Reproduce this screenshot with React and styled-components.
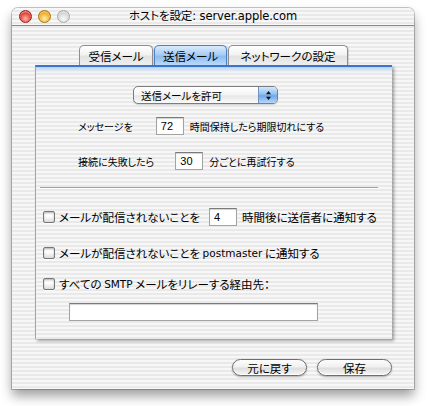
import React from 'react';
import styled, { createGlobalStyle } from 'styled-components';

const Global = createGlobalStyle`
  html, body { margin: 0; padding: 0; background: #ffffff; }
  body { font-family: "Noto Sans CJK JP", sans-serif; color: #000; font-feature-settings: "palt" 1; }
  * { box-sizing: border-box; }
`;

const stripes = 'repeating-linear-gradient(to bottom, #f7f7f7 0px, #f7f7f7 2px, #e9e9e9 2px, #e9e9e9 4px)';
const latin = '"DejaVu Sans", "Noto Sans CJK JP", sans-serif';

const Page = styled.div`
  width: 427px;
  height: 406px;
  padding: 8px 0 0 12px;
  background: #fff;
`;

const Window = styled.div`
  width: 402px;
  height: 381px;
  display: flex;
  flex-direction: column;
  background: ${stripes};
  border-radius: 6px 6px 0 0;
  box-shadow: 0 0 0 1px rgba(0, 0, 0, 0.22), 0 7px 12px rgba(0, 0, 0, 0.38);
  overflow: hidden;
`;

const TitleBar = styled.div`
  height: 18px;
  flex: none;
  display: grid;
  grid-template-columns: 1fr auto 1fr;
  align-items: center;
  padding: 0 7px;
  border-bottom: 1px solid #8a8a8a;
`;

const Lights = styled.div`
  display: flex;
  gap: 6px;
  align-items: center;
`;

const lightColors = {
  red: ['#ffb3a8', '#e0382c', '#9c1d16'],
  yellow: ['#fff0b0', '#f0a81a', '#a8700e'],
  gray: ['#fafafa', '#d2d2d2', '#a9a9a9'],
};

const Light = styled.span`
  width: 13px;
  height: 13px;
  border-radius: 50%;
  background: radial-gradient(circle at 50% 70%, ${p => lightColors[p.$c][0]} 0%, ${p => lightColors[p.$c][1]} 65%, ${p => lightColors[p.$c][2]} 100%);
  border: 1px solid ${p => lightColors[p.$c][2]};
  box-shadow: inset 0 1px 1px rgba(255, 255, 255, 0.6);
`;

const Title = styled.div`
  font-family: ${latin};
  font-size: 11.5px;
  letter-spacing: -0.1px;
  white-space: nowrap;
  line-height: 1;
`;

const Body = styled.div`
  flex: 1;
  display: flex;
  flex-direction: column;
  padding: 19px 22px 0 23px;
`;

const TabBar = styled.div`
  display: flex;
  justify-content: center;
  gap: 1px;
  height: 20px;
  position: relative;
  z-index: 1;
`;

const Tab = styled.div`
  width: ${p => p.$w}px;
  height: 20px;
  display: flex;
  align-items: center;
  justify-content: center;
  font-size: 11.5px;
  border: 1px solid ${p => (p.$active ? '#4d7fc4' : '#8e8e8e')};
  border-bottom: none;
  border-radius: 5px 5px 0 0;
  background: ${p =>
    p.$active
      ? 'linear-gradient(to bottom, #d9ebfd 0%, #a9cdf5 45%, #8dbcf0 55%, #b9daf9 100%)'
      : 'linear-gradient(to bottom, #ffffff 0%, #f2f2f2 45%, #e3e3e3 55%, #eeeeee 100%)'};
  box-shadow: 1px 0 1px rgba(0, 0, 0, 0.15);
`;

const Panel = styled.div`
  height: 274px;
  display: flex;
  flex-direction: column;
  border-top: 2px solid #3c74cd;
  border-left: 1px solid #a6a6a6;
  background:
    linear-gradient(to bottom, rgba(160, 200, 245, 0.85) 0px, rgba(200, 225, 250, 0.45) 3px, rgba(255, 255, 255, 0) 7px),
    ${stripes};
  box-shadow: 2px 2px 3px rgba(0, 0, 0, 0.35);
  padding: 19px 14px 0 7px;
`;

const PopupRow = styled.div`
  display: flex;
  padding-left: 90px;
`;

const Popup = styled.div`
  width: 145px;
  height: 18px;
  display: flex;
  border: 1px solid #7d7d7d;
  border-radius: 5px;
  overflow: hidden;
  background: linear-gradient(to bottom, #ffffff 0%, #f4f4f4 50%, #e6e6e6 55%, #fafafa 100%);
  box-shadow: 0 1px 1px rgba(0, 0, 0, 0.15);
`;

const PopupText = styled.div`
  flex: 1;
  font-size: 10.5px;
  padding-left: 7px;
  display: flex;
  align-items: center;
`;

const PopupArrows = styled.div`
  width: 19px;
  display: flex;
  align-items: center;
  justify-content: center;
  border-left: 1px solid #6f93c4;
  background: linear-gradient(to bottom, #d4e8fd 0%, #90c0f2 45%, #6ea7ea 55%, #b5d8fa 100%);
`;

const Row = styled.div`
  display: flex;
  align-items: center;
  margin-top: ${p => p.$mt}px;
  padding-left: ${p => p.$pl || 0}px;
  font-size: ${p => p.$fs || 10}px;
  white-space: nowrap;
`;

const Field = styled.div`
  width: ${p => p.$w}px;
  height: ${p => p.$h || 18}px;
  margin: 0 ${p => p.$mr ?? 6}px 0 ${p => p.$ml ?? 0}px;
  background: #fff;
  border: 1px solid #a3a3a3;
  border-top-color: #7a7a7a;
  box-shadow: inset 0 1px 1px rgba(0, 0, 0, 0.18);
  font-family: "Liberation Sans", sans-serif;
  font-size: 11px;
  display: flex;
  align-items: center;
  padding-left: 4px;
`;

const Separator = styled.div`
  height: 2px;
  margin: 17px 0 0 -3px;
  border-top: 1px solid #a3a3a3;
  border-bottom: 1px solid #fbfbfb;
`;

const Check = styled.span`
  width: 12px;
  height: 12px;
  flex: none;
  margin-right: 4px;
  border: 1px solid #777;
  border-radius: 2px;
  background: linear-gradient(to bottom, #f0f0f0 0%, #ffffff 40%, #dcdcdc 100%);
  box-shadow: inset 0 1px 2px rgba(0, 0, 0, 0.25), 0 1px 0 rgba(255, 255, 255, 0.8);
`;

const Latin = styled.span`
  font-family: ${latin};
  font-size: 10.5px;
`;

const Footer = styled.div`
  display: flex;
  justify-content: flex-end;
  gap: 10px;
  margin-top: 20px;
`;

const Button = styled.div`
  width: 75px;
  height: 17px;
  border: 1px solid #6e6e6e;
  border-radius: 9px;
  display: flex;
  align-items: center;
  justify-content: center;
  font-size: 11.5px;
  background: linear-gradient(to bottom, #fdfdfd 0%, #f0f0f0 45%, #dedede 55%, #f6f6f6 100%);
  box-shadow: 0 1px 2px rgba(0, 0, 0, 0.3), inset 0 -1px 1px rgba(255, 255, 255, 0.9);
`;

const Arrows = () => (
  <svg width="7" height="11" viewBox="0 0 7 11">
    <path d="M3.5 1 L6 4.2 L1 4.2 Z" fill="#111" />
    <path d="M3.5 10 L6 6.8 L1 6.8 Z" fill="#111" />
  </svg>
);

export default function App() {
  return (
    <>
      <Global />
      <Page>
        <Window>
          <TitleBar>
            <Lights>
              <Light $c="red" />
              <Light $c="yellow" />
              <Light $c="gray" />
            </Lights>
            <Title>ホストを設定: server.apple.com</Title>
            <span />
          </TitleBar>
          <Body>
            <TabBar>
              <Tab $w={74}>受信メール</Tab>
              <Tab $w={73} $active>送信メール</Tab>
              <Tab $w={120}>ネットワークの設定</Tab>
            </TabBar>
            <Panel>
              <PopupRow>
                <Popup>
                  <PopupText>送信メールを許可</PopupText>
                  <PopupArrows>
                    <Arrows />
                  </PopupArrows>
                </Popup>
              </PopupRow>
              <Row $mt={13} $pl={35}>
                メッセージを
                <Field $w={28} $ml={23}>72</Field>
                時間保持したら期限切れにする
              </Row>
              <Row $mt={17} $pl={35}>
                接続に失敗したら
                <Field $w={28} $ml={21}>30</Field>
                分ごとに再試行する
              </Row>
              <Separator />
              <Row $mt={19} $fs={11.5}>
                <Check />
                メールが配信されないことを
                <Field $w={28} $ml={9} $mr={5}>4</Field>
                時間後に送信者に通知する
              </Row>
              <Row $mt={19} $fs={11.5}>
                <Check />
                メールが配信されないことを&nbsp;<Latin>postmaster</Latin>&nbsp;に通知する
              </Row>
              <Row $mt={15} $fs={11.5}>
                <Check />
                すべての&nbsp;<Latin>SMTP</Latin>&nbsp;メールをリレーする経由先：
              </Row>
              <Row $mt={11} $pl={26}>
                <Field $w={249} $mr={0} />
              </Row>
            </Panel>
            <Footer>
              <Button>元に戻す</Button>
              <Button>保存</Button>
            </Footer>
          </Body>
        </Window>
      </Page>
    </>
  );
}
